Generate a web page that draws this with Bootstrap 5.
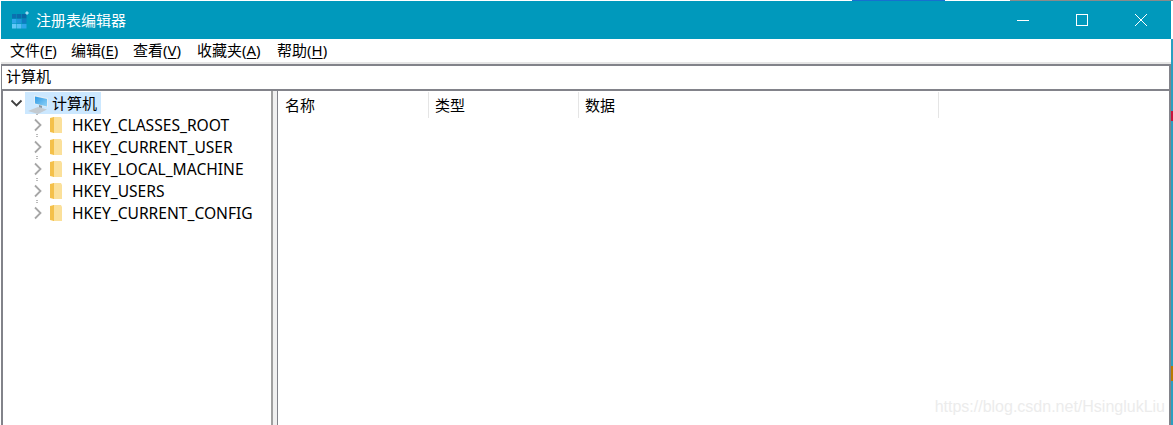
<!DOCTYPE html>
<html lang="zh-CN">
<head>
  <meta charset="UTF-8">
  <title>注册表编辑器</title>
  <link href="https://cdn.jsdelivr.net/npm/bootstrap@5.3.0/dist/css/bootstrap.min.css" rel="stylesheet">
  <style>
    html, body { height: 425px; overflow: hidden; background: #fff; }
    body { font-family: "Noto Sans", "Noto Sans CJK SC", sans-serif; font-size: 15px; color: #000; }
    .reg-shell { width: 1173px; height: 425px; }
    .reg-top { height: 1px; background: linear-gradient(90deg, #fff 0 852px, #1670d0 852px 945px, #fff 945px 1010px, #8a8a8a 1010px 1173px); }
    .reg-body { height: 424px; }
    .reg-window { width: 1171px; padding-left: 1px; }
    .reg-edge { width: 2px; background: linear-gradient(180deg, #fff 0 38px, #2a9fc0 38px 110px, #c8143c 110px 120px, #2a9fc0 120px 365px, #b87a00 365px 380px, #2a9fc0 380px); }
    .reg-title { height: 38px; background: #0099bc; color: #fff; font-size: 15px; }
    .reg-title-icon { margin-left: 11px; margin-right: 7px; }
    .reg-ctl { width: 59px; height: 38px; }
    .reg-ctls { margin-right: 1px; }
    .reg-menu { height: 23px; padding-left: 9px; line-height: 23px; font-size: 15px; }
    .reg-menu u { text-underline-offset: 2px; }
    .reg-menu-f { width: 61px; }
    .reg-menu-e { width: 62px; }
    .reg-menu-v { width: 64px; }
    .reg-menu-a { width: 80px; }
    .reg-gap { height: 2px; background: #e6e6e6; }
    .reg-address { height: 27px; border: 2px solid #82838a; border-left-width: 1px; padding-left: 4px; line-height: 20px; }
    .reg-panes { height: 334px; }
    .reg-tree { width: 270px; padding-top: 1px; padding-left: 4px; border-left: 2px solid #82838a; }
    .reg-node { height: 22px; line-height: 21px; font-size: 15.6px; }
    .reg-child { padding-left: 20px; }
    .reg-chev { width: 20px; flex: none; }
    .reg-folder { margin-left: 3px; margin-right: 10px; flex: none; }
    .reg-root-label { height: 22px; width: 76px; background: #cce8ff; padding-left: 2px; margin-left: -2px; }
    .reg-root-label span { margin-left: 2px; font-size: 15px; }
    .reg-split { width: 7px; border-left: 2px solid #a0a0a0; border-right: 1px solid #82838a; background: #f0f0f0; }
    .reg-list { padding-top: 1px; border-right: 2px solid #82838a; }
    .reg-head { height: 26px; line-height: 26px; }
    .reg-col { padding-left: 6px; border-right: 1px solid #e5e5e5; }
    .reg-col-name { width: 151px; padding-left: 7px; }
    .reg-col-type { width: 150px; }
    .reg-col-data { width: 360px; }
    .reg-mark { position: absolute; right: 8px; bottom: 6px; font-family: "Liberation Sans", sans-serif; font-size: 16px; color: #ececec; }
  </style>
</head>
<body>
  <div class="reg-shell position-relative">
    <div class="reg-top"></div>
    <div class="reg-body d-flex">
      <div class="reg-window">
        <div class="reg-title d-flex align-items-center">
          <svg class="reg-title-icon" width="17" height="18" viewBox="0 0 17 18">
            <rect y="3" width="4.500" height="4.500" fill="#0a70b0"/><rect x="5" y="3" width="4.500" height="4.500" fill="#0a6cab"/><rect x="10" y="3" width="4.500" height="4.500" fill="#0a68a5"/>
            <rect y="8" width="4.500" height="4.500" fill="#2ea6ea"/><rect x="5" y="8" width="4.500" height="4.500" fill="#1f94da"/><rect x="10" y="8" width="4.500" height="4.500" fill="#0f7cc0"/>
            <rect y="13" width="4.500" height="4.500" fill="#62c8f8"/><rect x="5" y="13" width="4.500" height="4.500" fill="#55bff5"/><rect x="10" y="13" width="4.500" height="4.500" fill="#2ea6ea"/>
            <path d="M15 0l2 2-2 2-2-2z" fill="#9fdcf2"/>
          </svg>
          <span>注册表编辑器</span>
          <div class="reg-ctls d-flex ms-auto">
            <div class="reg-ctl d-flex align-items-center justify-content-center">
              <svg width="12" height="12" viewBox="0 0 12 12"><path d="M0 6.500h12" stroke="#fff"/></svg>
            </div>
            <div class="reg-ctl d-flex align-items-center justify-content-center">
              <svg width="12" height="12" viewBox="0 0 12 12"><rect x=".5" y=".5" width="11" height="11" fill="none" stroke="#fff"/></svg>
            </div>
            <div class="reg-ctl d-flex align-items-center justify-content-center">
              <svg width="12" height="12" viewBox="0 0 12 12"><path d="M0 0l12 12M12 0L0 12" stroke="#fff"/></svg>
            </div>
          </div>
        </div>
        <div class="reg-menu d-flex">
          <span class="reg-menu-f">文件(<u>F</u>)</span>
          <span class="reg-menu-e">编辑(<u>E</u>)</span>
          <span class="reg-menu-v">查看(<u>V</u>)</span>
          <span class="reg-menu-a">收藏夹(<u>A</u>)</span>
          <span>帮助(<u>H</u>)</span>
        </div>
        <div class="reg-gap"></div>
        <div class="reg-address">计算机</div>
        <div class="reg-panes d-flex">
          <div class="reg-tree">
            <div class="reg-node d-flex align-items-center">
              <svg class="reg-chev" width="20" height="22" viewBox="0 0 20 22"><path d="M4.500 8.500l5 5 5-5" fill="none" stroke="#404040" stroke-width="1.800"/></svg>
              <div class="reg-root-label d-flex align-items-center">
                <svg width="23" height="22" viewBox="0 0 23 22">
                  <defs><linearGradient id="regScreen" x1="0" y1="0" x2="1" y2="1"><stop offset="0" stop-color="#2f9ae6"/><stop offset="1" stop-color="#8fd2f6"/></linearGradient></defs>
                  <path d="M1 19l10-4 9 2.500-9 4.500z" fill="#c3cad0"/>
                  <path d="M7 3l14 3v9.500L7 12z" fill="#e4eef5"/>
                  <path d="M8 4.500l12 2.500v7.500L8 11.500z" fill="url(#regScreen)"/>
                  <path d="M12 13l3 .8v2.200l-3-.8z" fill="#8e99a2"/>
                </svg>
                <span>计算机</span>
              </div>
            </div>
            <div class="reg-node reg-child d-flex align-items-center">
              <svg class="reg-chev" width="20" height="22" viewBox="0 0 20 22"><path d="M10 0v1M10 20v1" stroke="#777"/><path d="M8 5.500l5.500 5.500-5.500 5.500" fill="none" stroke="#a6a6a6" stroke-width="1.800"/></svg>
              <svg class="reg-folder" width="12" height="16" viewBox="0 0 12 16"><path d="M3 0h8l1 2v14H3z" fill="#fbe09a"/><path d="M0 1l4-1v16l-4-1z" fill="#f4c04a"/></svg>
              <span>HKEY_CLASSES_ROOT</span>
            </div>
            <div class="reg-node reg-child d-flex align-items-center">
              <svg class="reg-chev" width="20" height="22" viewBox="0 0 20 22"><path d="M10 0v1M10 20v1" stroke="#777"/><path d="M8 5.500l5.500 5.500-5.500 5.500" fill="none" stroke="#a6a6a6" stroke-width="1.800"/></svg>
              <svg class="reg-folder" width="12" height="16" viewBox="0 0 12 16"><path d="M3 0h8l1 2v14H3z" fill="#fbe09a"/><path d="M0 1l4-1v16l-4-1z" fill="#f4c04a"/></svg>
              <span>HKEY_CURRENT_USER</span>
            </div>
            <div class="reg-node reg-child d-flex align-items-center">
              <svg class="reg-chev" width="20" height="22" viewBox="0 0 20 22"><path d="M10 0v1M10 20v1" stroke="#777"/><path d="M8 5.500l5.500 5.500-5.500 5.500" fill="none" stroke="#a6a6a6" stroke-width="1.800"/></svg>
              <svg class="reg-folder" width="12" height="16" viewBox="0 0 12 16"><path d="M3 0h8l1 2v14H3z" fill="#fbe09a"/><path d="M0 1l4-1v16l-4-1z" fill="#f4c04a"/></svg>
              <span>HKEY_LOCAL_MACHINE</span>
            </div>
            <div class="reg-node reg-child d-flex align-items-center">
              <svg class="reg-chev" width="20" height="22" viewBox="0 0 20 22"><path d="M10 0v1M10 20v1" stroke="#777"/><path d="M8 5.500l5.500 5.500-5.500 5.500" fill="none" stroke="#a6a6a6" stroke-width="1.800"/></svg>
              <svg class="reg-folder" width="12" height="16" viewBox="0 0 12 16"><path d="M3 0h8l1 2v14H3z" fill="#fbe09a"/><path d="M0 1l4-1v16l-4-1z" fill="#f4c04a"/></svg>
              <span>HKEY_USERS</span>
            </div>
            <div class="reg-node reg-child d-flex align-items-center">
              <svg class="reg-chev" width="20" height="22" viewBox="0 0 20 22"><path d="M10 0v1" stroke="#777"/><path d="M8 5.500l5.500 5.500-5.500 5.500" fill="none" stroke="#a6a6a6" stroke-width="1.800"/></svg>
              <svg class="reg-folder" width="12" height="16" viewBox="0 0 12 16"><path d="M3 0h8l1 2v14H3z" fill="#fbe09a"/><path d="M0 1l4-1v16l-4-1z" fill="#f4c04a"/></svg>
              <span>HKEY_CURRENT_CONFIG</span>
            </div>
          </div>
          <div class="reg-split"></div>
          <div class="reg-list flex-grow-1">
            <div class="reg-head d-flex">
              <div class="reg-col reg-col-name">名称</div>
              <div class="reg-col reg-col-type">类型</div>
              <div class="reg-col reg-col-data">数据</div>
            </div>
          </div>
        </div>
      </div>
      <div class="reg-edge"></div>
    </div>
    <div class="reg-mark">https://blog.csdn.net/HsinglukLiu</div>
  </div>
  <script src="https://cdn.jsdelivr.net/npm/bootstrap@5.3.0/dist/js/bootstrap.bundle.min.js"></script>
</body>
</html>
